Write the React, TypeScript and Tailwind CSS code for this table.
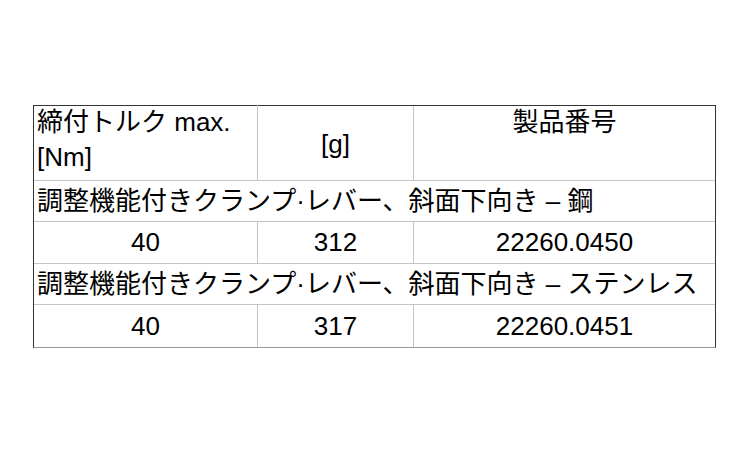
import React from 'react';

const ROWS = [
  { title: '調整機能付きクランプ·レバー、斜面下向き – 鋼', torque: '40', weight: '312', code: '22260.0450' },
  { title: '調整機能付きクランプ·レバー、斜面下向き – ステンレス', torque: '40', weight: '317', code: '22260.0451' },
];

export default function App() {
  return (
    <div className="w-[750px] h-[450px] bg-white pt-[105px] pl-[33px] text-black text-[26px] leading-[31px] font-['Liberation_Sans','Noto_Sans_CJK_JP',sans-serif]">
      <div className="w-[683px] border-l border-t border-r border-[#333] border-b border-b-[#9a9a9a]">
        {/* header */}
        <div className="grid grid-cols-[224px_156px_1fr] h-[75px] border-b border-[#c4c4c4]">
          <div className="border-r border-[#c4c4c4] pl-[3px] leading-[35px] -mt-[1px]">
            <div>締付トルク max.</div>
            <div>[Nm]</div>
          </div>
          <div className="border-r border-[#c4c4c4] flex items-center justify-center pt-[2px]">[g]</div>
          <div className="text-center pt-[1px]">製品番号</div>
        </div>

        {ROWS.map((row, i) => (
          <div key={row.code}>
            <div className="h-[41px] border-b border-[#c4c4c4] flex items-center pl-[3px] whitespace-nowrap">
              {row.title}
            </div>
            <div
              className={
                'grid grid-cols-[224px_156px_1fr] h-[42px] ' +
                (i < ROWS.length - 1 ? 'border-b border-[#c4c4c4]' : '')
              }
            >
              <div className="border-r border-[#c4c4c4] flex items-center justify-center">{row.torque}</div>
              <div className="border-r border-[#c4c4c4] flex items-center justify-center">{row.weight}</div>
              <div className="flex items-center justify-center">{row.code}</div>
            </div>
          </div>
        ))}
      </div>
    </div>
  );
}
